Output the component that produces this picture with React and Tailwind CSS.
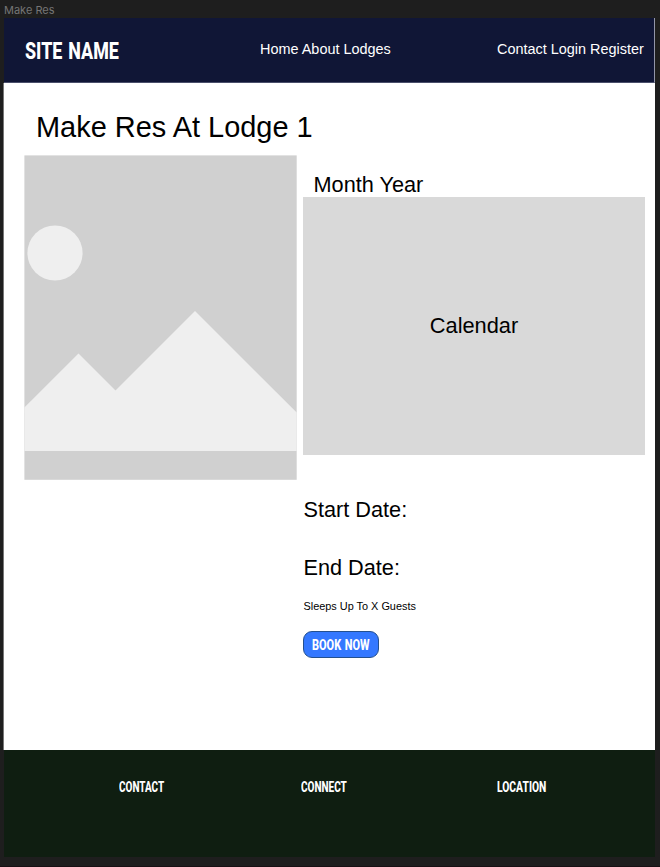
function CondensedLabel({ children, className }) {
  return (
    <span className={`block whitespace-nowrap origin-left font-['Roboto',sans-serif] font-extrabold ${className}`}>
      {children}
    </span>
  );
}

function Header() {
  return (
    <header className="ml-px flex h-[65px] shrink-0 border-b border-b-[#4a4f6b] border-r border-r-[#9295a8] bg-[#101636] text-white">
      <div className="w-[256px] pl-[20.5px] pt-[19px]">
        <CondensedLabel className="text-[24px] leading-[29px] [word-spacing:2px] scale-x-[0.745]">SITE NAME</CondensedLabel>
      </div>
      <nav className="w-[237px] whitespace-nowrap pt-[23px] text-[14.45px] leading-[17px]">Home About Lodges</nav>
      <nav className="whitespace-nowrap pt-[23px] text-[14.45px] leading-[17px]">Contact Login Register</nav>
    </header>
  );
}

function PlaceholderImage() {
  return (
    <svg className="block h-[325px] w-[273px] shrink-0" viewBox="0 0 273 325">
      <rect x="0.4" y="0.4" width="272.3" height="324.4" fill="#d0d0d0" />
      <circle cx="31" cy="98" r="27.6" fill="#efefef" />
      <path d="M.4 252.5 54.5 198.5 91.5 235.5 171 156 272.7 257.5V296H.4Z" fill="#efefef" />
    </svg>
  );
}

export default function App() {
  return (
    <div className="flex h-[867px] w-[660px] flex-col overflow-hidden bg-[#1e1e1e] font-['Liberation_Sans',Arial,sans-serif] text-black">
      <div className="h-[18px] shrink-0 whitespace-nowrap pl-[4px] pt-[3px] font-['Inter',sans-serif] text-[11px] leading-[14px] text-[#757575]">
        Make Res
      </div>
      <div className="ml-[3px] flex h-[839px] w-[652px] shrink-0 flex-col">
        <Header />
        <main className="flex h-[667px] shrink-0 flex-col border-l border-l-[#777] bg-white pl-5">
          <h1 className="whitespace-nowrap pl-[12px] pt-[27px] text-[28.95px] leading-[34px]">Make Res At Lodge 1</h1>
          <div className="mt-[11px] flex gap-[6px]">
            <PlaceholderImage />
            <section className="flex w-[342px] flex-col items-start pt-[17px]">
              <h2 className="pl-[10.5px] text-[21.7px] leading-[25px]">Month Year</h2>
              <div className="flex h-[258px] w-full items-center justify-center bg-[#d9d9d9] pb-[2px] text-[21.8px] leading-[25px]">
                Calendar
              </div>
              <p className="mt-[42px] pl-[0.5px] text-[21.7px] leading-[25px]">Start Date:</p>
              <p className="mt-[33px] pl-[0.5px] text-[21.7px] leading-[25px]">End Date:</p>
              <p className="mt-[20px] pl-[0.5px] text-[10.9px] leading-[13px]">Sleeps Up To X Guests</p>
              <button className="mt-[18px] h-[27px] w-[76px] rounded-[9px] border border-[#24508f] bg-[#3478ff] pl-[8px] pt-px text-left text-white">
                <CondensedLabel className="text-[14.5px] leading-[25px] [word-spacing:1px] scale-x-[0.757]">BOOK NOW</CondensedLabel>
              </button>
            </section>
          </div>
        </main>
        <footer className="ml-px flex h-[107px] shrink-0 bg-[#0f1e11] pl-[115px] pt-[29px] text-white">
          <div className="w-[182px]">
            <CondensedLabel className="text-[14.5px] leading-[18px] scale-x-[0.686]">CONTACT</CondensedLabel>
          </div>
          <div className="w-[196px]">
            <CondensedLabel className="text-[14.5px] leading-[18px] scale-x-[0.69]">CONNECT</CondensedLabel>
          </div>
          <CondensedLabel className="text-[14.5px] leading-[18px] scale-x-[0.71]">LOCATION</CondensedLabel>
        </footer>
      </div>
      <div className="mt-auto h-px w-full bg-[#181014]" />
    </div>
  );
}
